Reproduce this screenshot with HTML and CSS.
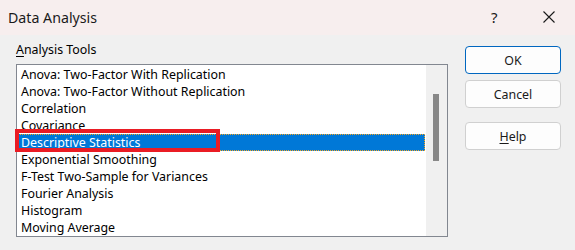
FILE: index.html
```html
<!DOCTYPE html>
<html>
<head>
<meta charset="utf-8">
<link rel="stylesheet" href="styles.css">
</head>
<body>
<div class="dialog">
  <div class="titlebar">
    <span class="title">Data Analysis</span>
    <span class="tb-help">?</span>
    <span class="tb-close">
      <svg width="12" height="12" viewBox="0 0 12 12"><path d="M0.5 0.5 L11.5 11.5 M11.5 0.5 L0.5 11.5" stroke="#1a1a1a" stroke-width="1.1" fill="none"/></svg>
    </span>
  </div>
  <div class="content">
    <div class="left">
      <div class="label"><u>A</u>nalysis Tools</div>
      <div class="listbox">
        <div class="items">
          <div class="item">Anova: Two-Factor With Replication</div>
          <div class="item">Anova: Two-Factor Without Replication</div>
          <div class="item">Correlation</div>
          <div class="item">Covariance</div>
          <div class="item selected">Descriptive Statistics<span class="highlight"></span></div>
          <div class="item">Exponential Smoothing</div>
          <div class="item">F-Test Two-Sample for Variances</div>
          <div class="item">Fourier Analysis</div>
          <div class="item">Histogram</div>
          <div class="item">Moving Average</div>
        </div>
        <div class="scrollbar"><div class="thumb"></div></div>
      </div>
    </div>
    <div class="buttons">
      <div class="btn default">OK</div>
      <div class="btn">Cancel</div>
      <div class="btn help"><u>H</u>elp</div>
    </div>
  </div>
</div>
</body>
</html>
```

FILE: styles.css
```css
* { box-sizing: border-box; }
html, body { margin: 0; padding: 0; }
body {
  width: 575px;
  height: 250px;
  background: #f0f0f0;
  font-family: "Noto Sans", "Open Sans", sans-serif;
  font-size: 12.4px;
  color: #000;
  overflow: hidden;
}
.dialog { width: 575px; height: 250px; }
.titlebar {
  height: 35px;
  background: #f7eeee;
  display: flex;
  align-items: center;
  padding-left: 8px;
}
.title {
  font-size: 14.2px;
  color: #1a1a1a;
  flex: 1;
  margin-top: -1px;
}
.tb-help {
  font-size: 15px;
  color: #1a1a1a;
  width: 12px;
  margin-right: 40px;
  margin-top: -1px;
}
.tb-close {
  display: flex;
  width: 12px;
  height: 12px;
  margin-right: 20px;
  margin-top: -1px;
}
.content {
  display: flex;
  padding-left: 16px;
}
.left { width: 432px; }
.label {
  height: 29px;
  padding-top: 6px;
  line-height: 17px;
  color: #000;
}
.label u, .btn u { text-decoration-thickness: 1px; text-underline-offset: 2px; }
.listbox {
  width: 432px;
  height: 173px;
  border: 1px solid #828790;
  background: #fff;
  display: flex;
}
.items {
  width: 409px;
  padding-top: 1px;
}
.item {
  height: 17px;
  line-height: 17px;
  padding-left: 4px;
  white-space: nowrap;
  overflow: visible;
}
.item.selected {
  position: relative;
  background: #0078d7;
  color: #fff;
  outline: 1px dotted #f5a623;
  outline-offset: -1px;
  width: 408px;
}
.highlight {
  position: absolute;
  left: -2px;
  top: -5px;
  width: 205px;
  height: 23px;
  border: 4px solid #ea1c24;
}
.scrollbar {
  width: 21px;
  background: #f0f0f0;
  padding-top: 29px;
  padding-left: 7px;
}
.thumb {
  width: 6px;
  height: 67px;
  background: #888888;
}
.buttons {
  margin-left: 17px;
  padding-top: 11px;
  display: flex;
  flex-direction: column;
  width: 96px;
}
.btn {
  height: 28px;
  border: 1px solid #d0d0d0;
  border-radius: 4px;
  background: #fdfdfd;
  display: flex;
  align-items: center;
  justify-content: center;
  color: #1a1a1a;
  margin-bottom: 6px;
}
.btn.default { border-color: #0067c0; }
.btn.help { margin-top: 8px; }
```
